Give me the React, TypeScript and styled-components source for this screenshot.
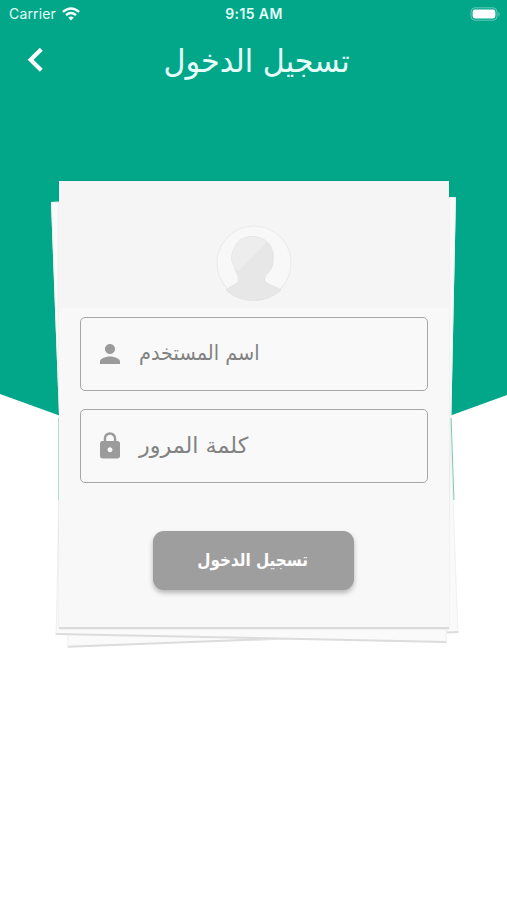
import React from "react";
import styled, { createGlobalStyle } from "styled-components";
import { MdLock, MdPerson } from "react-icons/md";

const Global = createGlobalStyle`
  * { box-sizing: border-box; }
  body { margin: 0; background: #fff; font-family: Inter, "DejaVu Sans", sans-serif; }
`;
const Screen = styled.main`
  position: relative;
  width: 507px;
  height: 900px;
  overflow: hidden;
  background: #fff;
`;
const Backdrop = styled.div`
  position: absolute;
  inset: 0 0 auto;
  height: 500px;
  background: #02a78a;
  clip-path: polygon(0 0, 100% 0, 100% 395px, 452px 415px, 253px 480px, 58px 415px, 0 394px);
`;
const StatusBar = styled.div`
  position: relative;
  height: 27px;
  display: grid;
  grid-template-columns: 1fr auto 1fr;
  align-items: center;
  padding: 0 6px 0 9px;
  color: #e2fff7;
  font-size: 14px;
  line-height: 27px;
`;
const Carrier = styled.div`
  display: flex;
  align-items: center;
  gap: 6px;
  letter-spacing: 0.15px;
`;
const Clock = styled.div`
  padding-right: 2px;
  font-size: 14px;
  font-weight: 600;
  letter-spacing: 0.4px;
`;
const BatteryIcon = styled.svg`
  justify-self: end;
`;
const Header = styled.header`
  position: relative;
  height: 66px;
  display: grid;
  grid-template-columns: 72px 1fr 72px;
  align-items: center;
`;
const Back = styled.button`
  border: 0;
  padding: 0;
  height: 66px;
  background: none;
  display: flex;
  align-items: center;
  justify-content: center;
`;
const Arabic = styled.span<{ $size: number; $stretch?: number; $weight?: number; $color: string; $origin?: string }>`
  display: inline-block;
  direction: rtl;
  white-space: nowrap;
  font-family: "DejaVu Sans", sans-serif;
  font-size: ${(p) => p.$size}px;
  font-weight: ${(p) => p.$weight ?? 400};
  line-height: 1.2;
  color: ${(p) => p.$color};
  transform: scaleX(${(p) => p.$stretch ?? 1});
  transform-origin: ${(p) => p.$origin ?? "center"};
`;
const Title = styled.h1`
  margin: 0;
  padding: 2px 0 0 6px;
  text-align: center;
  font-weight: 400;
  line-height: 1;
`;
const Stack = styled.section`
  position: relative;
  width: 390px;
  margin: 88px 0 0 59px;
`;
const Sheet = styled.div<{ $x: number; $y: number; $turn: number }>`
  position: absolute;
  left: ${(p) => p.$x}px;
  top: ${(p) => p.$y}px;
  width: 391px;
  height: 446px;
  background: #fafafa;
  border: 1px solid #f0f0f0;
  border-bottom: 2px solid #dcdcdc;
  transform-origin: 0 0;
  transform: rotate(${(p) => p.$turn}deg);
`;
const Edge = styled.i<{ $x: number; $w: number; $color: string; $turn: number }>`
  position: absolute;
  left: ${(p) => p.$x}px;
  top: 237px;
  width: ${(p) => p.$w}px;
  height: 82px;
  background: ${(p) => p.$color};
  transform: rotate(${(p) => p.$turn}deg);
`;
const Card = styled.form`
  position: relative;
  height: 448px;
  padding: 43px 22px 0 21px;
  display: flex;
  flex-direction: column;
  align-items: center;
  background: linear-gradient(#f5f5f5 0 127px, #f8f8f8 127px);
  border-bottom: 2px solid #dadada;
  box-shadow: 0 0 2px rgba(0, 0, 0, 0.1);
`;
const Avatar = styled.svg`
  flex: none;
  width: 78px;
  height: 78px;
`;
const Field = styled.label`
  width: 348px;
  height: 74px;
  flex: none;
  display: flex;
  align-items: center;
  gap: 14px;
  padding-left: 14px;
  margin-top: 15px;
  border: 1.5px solid #a6a6a6;
  border-radius: 5px;
  background: #f9f9f9;
  color: #9b9b9b;
  & + & { margin-top: 18px; }
`;
const Login = styled.button`
  flex: none;
  width: 201px;
  height: 59px;
  margin: 48px 1px 0 0;
  padding: 0;
  border: 0;
  border-radius: 11px;
  background: #9e9e9e;
  box-shadow: 0 3px 5px rgba(0, 0, 0, 0.27);
`;

export default function App() {
  return (
    <Screen>
      <Global />
      <Backdrop />
      <StatusBar>
        <Carrier>
          Carrier
          <svg width="18" height="14" viewBox="0 0 18 14" fill="none" stroke="#f4fffc" strokeWidth="2.5">
            <path d="M0.9 4.9Q9 -2 17.1 4.9M4 8.1Q9 4 14 8.1" />
            <path d="M6.2 10.6Q9 8.3 11.8 10.6L9 13.5Z" fill="#f4fffc" stroke="none" />
          </svg>
        </Carrier>
        <Clock>9:15 AM</Clock>
        <BatteryIcon width="31" height="14" viewBox="0 0 31 14">
          <rect x="1" y="0.8" width="26" height="12.4" rx="4" fill="none" stroke="#66cbb9" />
          <rect x="2.6" y="2.5" width="22.8" height="9" rx="2.4" fill="#fff" />
          <path d="M28.5 5v4.4Q31 7.2 28.5 5" fill="#66cbb9" />
        </BatteryIcon>
      </StatusBar>
      <Header>
        <Back type="button" aria-label="رجوع">
          <svg width="18" height="26" viewBox="0 0 18 26" fill="none" stroke="#fff" strokeWidth="4.1">
            <path d="M14.3 2.3L3.6 12.8L14.3 23.3" />
          </svg>
        </Back>
        <Title><Arabic $size={32} $stretch={0.945} $color="#e6fffa">تسجيل الدخول</Arabic></Title>
      </Header>
      <Stack>
        <Sheet $x={-8} $y={21} $turn={-2.15} />
        <Sheet $x={6} $y={8} $turn={1.2} />
        <Edge $x={-1} $w={1} $color="#b9e4d9" $turn={0} />
        <Edge $x={392.5} $w={1.2} $color="#7cc8b7" $turn={-2} />
        <Card>
          <Avatar viewBox="0 0 78 78">
            <circle cx="39" cy="39" r="37" fill="#f8f8f8" stroke="#ebebeb" strokeWidth="1.1" />
            <path d="M11 66C17 61 23 60 23.5 56C24 50 20 49 19.5 43C14 36 17 23 25 16C34 10 49 12 55 21C60 29 59 42 54 48C50 51 49 55 50 57C53 61 60 62 66 66C51 80 26 80 11 66Z" fill="#e7e7e7" stroke="#e1e1e1" strokeWidth="0.8" />
            <path d="M23 47L19.5 43C14 36 17 23 25 16C32 11.5 45 11.5 52 18Z" fill="#ededed" />
          </Avatar>
          <Field>
            <MdPerson size={30} />
            <Arabic $size={21} $stretch={0.92} $color="#828282" $origin="left">اسم المستخدم</Arabic>
          </Field>
          <Field>
            <MdLock size={30} />
            <Arabic $size={22} $stretch={1.01} $color="#828282" $origin="left">كلمة المرور</Arabic>
          </Field>
          <Login type="button">
            <Arabic $size={17.5} $stretch={0.87} $weight={700} $color="#fff">تسجيل الدخول</Arabic>
          </Login>
        </Card>
      </Stack>
    </Screen>
  );
}
